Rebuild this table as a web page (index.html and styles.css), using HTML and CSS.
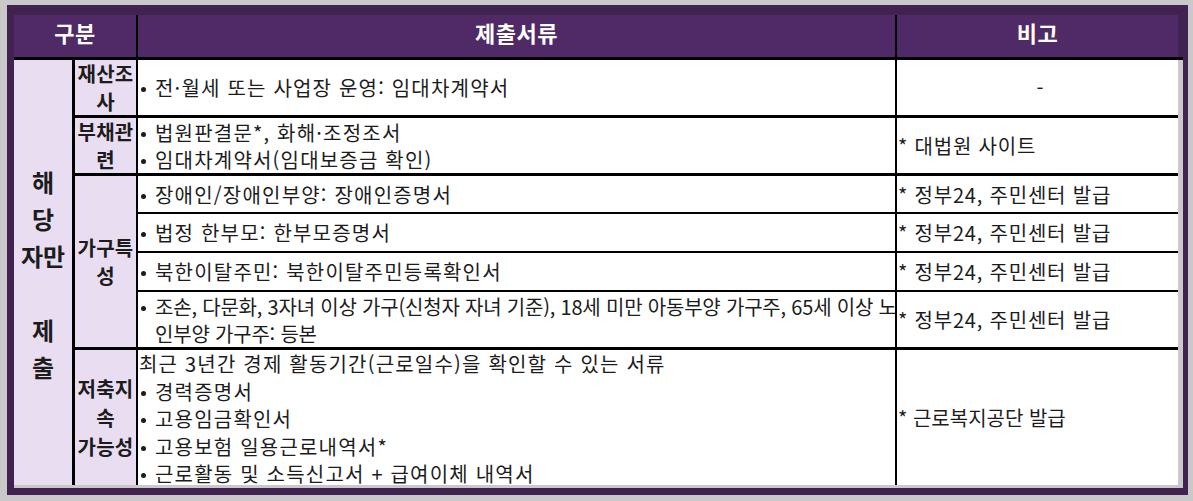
FILE: index.html
```html
<!DOCTYPE html>
<html lang="ko">
<head>
<meta charset="utf-8">
<title>제출서류</title>
<link rel="stylesheet" href="styles.css">
</head>
<body>
<div class="frame">
  <div class="sheet">
    <div class="hd hd-cat">구분</div>
    <div class="hd hd-docs">제출서류</div>
    <div class="hd hd-note">비고</div>
    <div class="hd-gap"></div>

    <div class="cat">해<br>당<br>자만<br><br>제<br>출</div>

    <div class="sub row-1">재산조<br>사</div>
    <div class="doc row-1 thick"><div class="li">전·월세 또는 사업장 운영: 임대차계약서</div></div>
    <div class="note row-1 thick center">-</div>

    <div class="sub row-2">부채관<br>련</div>
    <div class="doc row-2 thick">
      <div class="li">법원판결문*, 화해·조정조서</div>
      <div class="li">임대차계약서(임대보증금 확인)</div>
    </div>
    <div class="note row-2 thick">* 대법원 사이트</div>

    <div class="sub row-house">가구특<br>성</div>
    <div class="doc row-3 thin"><div class="li">장애인/장애인부양: 장애인증명서</div></div>
    <div class="note row-3 thin">* 정부24, 주민센터 발급</div>
    <div class="doc row-4 thin"><div class="li">법정 한부모: 한부모증명서</div></div>
    <div class="note row-4 thin">* 정부24, 주민센터 발급</div>
    <div class="doc row-5 thin"><div class="li">북한이탈주민: 북한이탈주민등록확인서</div></div>
    <div class="note row-5 thin">* 정부24, 주민센터 발급</div>
    <div class="doc row-6 thick condensed"><div class="li"><span class="nw">조손, 다문화, 3자녀 이상 가구(신청자 자녀 기준), 18세 미만 아동부양 가구주, 65세 이상 노<br>인부양 가구주: 등본</span></div></div>
    <div class="note row-6 thick">* 정부24, 주민센터 발급</div>

    <div class="sub row-7 tall">저축지<br>속<br>가능성</div>
    <div class="doc row-7 top">
      <div class="lead">최근 3년간 경제 활동기간(근로일수)을 확인할 수 있는 서류</div>
      <div class="li">경력증명서</div>
      <div class="li">고용임금확인서</div>
      <div class="li">고용보험 일용근로내역서*</div>
      <div class="li">근로활동 및 소득신고서 + 급여이체 내역서</div>
    </div>
    <div class="note row-7 plain">* 근로복지공단 발급</div>
  </div>
</div>
</body>
</html>
```
FILE: styles.css
```css
* { box-sizing: border-box; }
body {
  margin: 0;
  background: #c9c9c9;
  font-family: "Noto Sans CJK KR", "Noto Sans", sans-serif;
  color: #1c1c1c;
}
.frame {
  margin: 5px 5px 6px 7px;
  width: 1181px;
  background: #412251;
  padding: 10px 5px 7px 7px;
}
.sheet {
  display: grid;
  grid-template-columns: 61px 63px 759px 281px 5px;
  grid-template-rows: 45px 58px 58px 38px 39px 39px 58px 135px 3px;
  background: #c9c9c9;
}
.hd {
  background: #502a66;
  color: #fff;
  font-weight: 700;
  font-size: 22px;
  letter-spacing: 0.5px;
  display: flex;
  align-items: center;
  justify-content: center;
  padding-bottom: 8px;
  border-bottom: 3px solid #000;
}
.hd-cat { grid-column: 1 / 3; grid-row: 1; border-right: 2px solid #000; }
.hd-docs { grid-column: 3; grid-row: 1; border-right: 2px solid #000; }
.hd-note { grid-column: 4; grid-row: 1; }
.hd-gap { grid-column: 5; grid-row: 1; background: #412251; border-bottom: 3px solid #000; }

.cat {
  grid-column: 1;
  grid-row: 2 / 9;
  background: #e9ddf1;
  border-right: 3px solid #000;
  font-weight: 700;
  font-size: 24px;
  line-height: 37px;
  display: flex;
  align-items: center;
  justify-content: center;
  text-align: center;
  padding-top: 3px;
}
.sub {
  grid-column: 2;
  background: #e9ddf1;
  border-right: 2px solid #000;
  border-bottom: 3px solid #000;
  font-weight: 700;
  font-size: 20px;
  letter-spacing: 0.3px;
  line-height: 28px;
  display: flex;
  align-items: center;
  justify-content: center;
  text-align: center;
}
.sub.tall { line-height: 29px; border-bottom: 0; }
.row-1 { grid-row: 2; }
.row-2 { grid-row: 3; }
.row-3 { grid-row: 4; }
.row-4 { grid-row: 5; }
.row-5 { grid-row: 6; }
.row-6 { grid-row: 7; }
.row-7 { grid-row: 8; }
.row-house { grid-row: 4 / 8; }

.doc {
  grid-column: 3;
  background: #fff;
  border-right: 2px solid #000;
  font-size: 20px;
  letter-spacing: 1.2px;
  line-height: 27px;
  display: flex;
  flex-direction: column;
  justify-content: center;
  overflow: hidden;
}
.doc.condensed { letter-spacing: -0.2px; }
.doc.top { justify-content: flex-start; line-height: 27.5px; overflow: visible; }
.note {
  grid-column: 4;
  background: #fff;
  font-size: 20px;
  letter-spacing: 0.8px;
  display: flex;
  align-items: center;
  padding-left: 1px;
}
.note.plain { letter-spacing: 0; }
.note.center { justify-content: center; padding-left: 6px; }
.thick { border-bottom: 3px solid #000; }
.thin { border-bottom: 2px solid #000; }
.li { display: flex; }
.li::before {
  content: "";
  flex: none;
  width: 5px;
  height: 5px;
  border-radius: 50%;
  background: #1c1c1c;
  margin: 13px 9px 0 3px;
}
.lead { padding-left: 1px; }
.nw { white-space: nowrap; }
```
